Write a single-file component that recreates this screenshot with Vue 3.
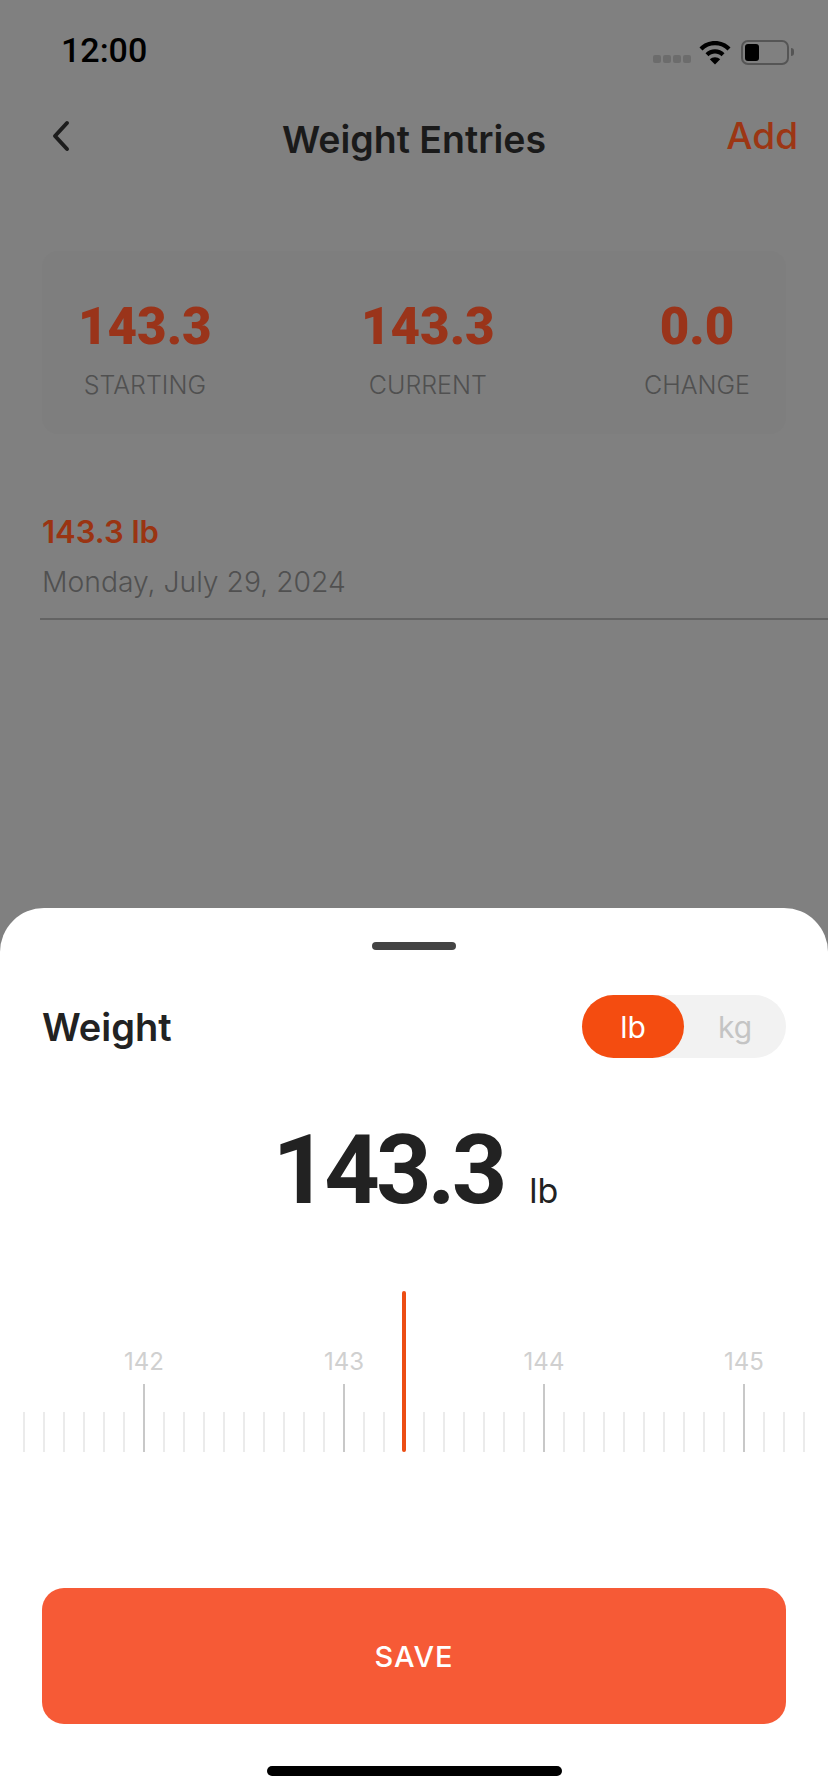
<template>
  <div class="page">
    <div class="status-bar">
      <span class="time">12:00</span>
      <div class="status-icons">
        <div class="signal">
          <i v-for="n in 4" :key="n"></i>
        </div>
        <svg class="wifi" viewBox="0 0 32 25" width="32" height="25">
          <path d="M0.500 7.500C4.500 3.200 10 1 16 1s11.500 2.200 15.500 6.500l-3 3C25.300 7 20.900 5.200 16 5.200S6.700 7 3.500 10.500z" fill="#000" />
          <path d="M6.500 13.300C9 10.700 12.300 9.300 16 9.300s7 1.400 9.500 4l-3 3c-1.700-1.800-4-2.800-6.500-2.800s-4.800 1-6.500 2.800z" fill="#000" />
          <path d="M16 24.500l-5.200-5.300c1.400-1.300 3.200-2 5.200-2s3.800 0.700 5.200 2z" fill="#000" />
        </svg>
        <div class="battery">
          <div class="battery-fill"></div>
        </div>
        <div class="battery-nub"></div>
      </div>
    </div>

    <header class="nav">
      <svg class="back" viewBox="0 0 22 32" width="22" height="32">
        <path d="M17 3L5 16l12 13" fill="none" stroke="#1c1c1c" stroke-width="4" stroke-linecap="round" stroke-linejoin="round" />
      </svg>
      <h1>Weight Entries</h1>
      <span class="add">Add</span>
    </header>

    <section class="summary">
      <div v-for="s in stats" :key="s.label" class="stat">
        <div class="stat-value">{{ s.value }}</div>
        <div class="stat-label">{{ s.label }}</div>
      </div>
    </section>

    <div class="entry">
      <div class="entry-weight">143.3 lb</div>
      <div class="entry-date">Monday, July 29, 2024</div>
    </div>

    <section class="sheet">
      <div class="handle"></div>

      <div class="sheet-head">
        <span class="sheet-title">Weight</span>
        <div class="unit-toggle">
          <span class="unit active">lb</span>
          <span class="unit">kg</span>
        </div>
      </div>

      <div class="reading">
        <span class="reading-value">143.3</span>
        <span class="reading-unit">lb</span>
      </div>

      <div class="ruler">
        <div class="pointer"></div>
        <div
          v-for="t in ticks"
          :key="t.index"
          class="tick"
          :class="{ major: t.label }"
        >
          <span v-if="t.label" class="tick-label">{{ t.label }}</span>
        </div>
      </div>

      <button class="save">SAVE</button>
      <div class="home-indicator"></div>
    </section>
  </div>
</template>

<script setup>
const stats = [
  { value: '143.3', label: 'STARTING' },
  { value: '143.3', label: 'CURRENT' },
  { value: '0.0', label: 'CHANGE' }
]

// one tick every 20px, a labelled one every 10th
const ticks = Array.from({ length: 40 }, (_, index) => ({
  index,
  label: (index - 6) % 10 === 0 ? String(142 + (index - 6) / 10) : ''
}))
</script>

<style>
html,
body {
  margin: 0;
  background: #808080;
}
</style>

<style scoped>
* {
  box-sizing: border-box;
}

.page {
  width: 828px;
  height: 1792px;
  overflow: hidden;
  display: flex;
  flex-direction: column;
  background: #808080;
  font-family: Inter, "Noto Sans", sans-serif;
}

.status-bar {
  height: 100px;
  padding: 32px 34px 0 61px;
  display: flex;
  justify-content: space-between;
  align-items: flex-start;
  flex-shrink: 0;
}

.time {
  font-family: Roboto, sans-serif;
  font-weight: 500;
  font-size: 34px;
  line-height: 36px;
  color: #000;
}

.status-icons {
  display: flex;
  align-items: center;
  height: 36px;
  margin-top: 2px;
}

.signal {
  display: flex;
  gap: 2px;
  margin: 13px 8px 0 0;
}

.signal i {
  display: block;
  width: 8px;
  height: 8px;
  border-radius: 2px;
  background: #6c6c6c;
}

.wifi {
  margin-right: 10px;
}

.battery {
  width: 48px;
  height: 25px;
  border: 2px solid #555;
  border-radius: 7px;
  padding: 2px;
}

.battery-fill {
  width: 14px;
  height: 17px;
  background: #000;
  border-radius: 3px;
}

.battery-nub {
  width: 3px;
  height: 8px;
  margin-left: 2px;
  background: #555;
  border-radius: 0 3px 3px 0;
}

.nav {
  height: 78px;
  padding: 0 30px 0 50px;
  display: flex;
  justify-content: space-between;
  align-items: center;
  position: relative;
  flex-shrink: 0;
}

.back {
  margin-bottom: 6px;
}

.nav h1 {
  position: absolute;
  left: 0;
  right: 0;
  top: 19px;
  margin: 0;
  text-align: center;
  font-size: 37.500px;
  line-height: 42px;
  font-weight: 600;
  color: #1a1a1a;
}

.add {
  font-size: 37px;
  font-weight: 500;
  color: #9c3614;
  margin-bottom: 8px;
}

.summary {
  margin: 73px 42px 0;
  height: 183px;
  padding: 0 36px;
  display: flex;
  justify-content: space-between;
  align-items: flex-start;
  background: #7e7e7e;
  border-radius: 16px;
  flex-shrink: 0;
}

.stat {
  display: flex;
  flex-direction: column;
  align-items: center;
  padding-top: 46px;
}

.stat-value {
  font-family: Roboto, sans-serif;
  font-weight: 900;
  font-size: 51px;
  line-height: 60px;
  color: #9a341a;
}

.stat-label {
  margin-top: 12px;
  font-size: 25px;
  line-height: 32px;
  font-weight: 300;
  color: #505050;
}

.entry {
  margin: 78px 0 0 40px;
  height: 108px;
  padding-left: 2px;
  border-bottom: 2px solid #636363;
  flex-shrink: 0;
}

.entry-weight {
  font-size: 31px;
  line-height: 40px;
  font-weight: 600;
  color: #9a3412;
}

.entry-date {
  margin-top: 10px;
  font-size: 28.300px;
  line-height: 40px;
  font-weight: 300;
  color: #505050;
}

.sheet {
  margin-top: auto;
  height: 884px;
  flex-shrink: 0;
  background: #fff;
  border-radius: 44px 44px 0 0;
  display: flex;
  flex-direction: column;
  align-items: center;
}

.handle {
  width: 84px;
  height: 8px;
  margin-top: 34px;
  border-radius: 4px;
  background: #444;
}

.sheet-head {
  width: 100%;
  margin-top: 45px;
  padding: 0 42px;
  display: flex;
  justify-content: space-between;
  align-items: center;
}

.sheet-title {
  font-size: 38px;
  font-weight: 600;
  color: #222;
}

.unit-toggle {
  width: 204px;
  height: 63px;
  border-radius: 32px;
  background: #f2f2f2;
  display: flex;
}

.unit {
  width: 102px;
  border-radius: 32px;
  display: flex;
  align-items: center;
  justify-content: center;
  font-size: 30px;
  color: #c4c4c4;
}

.unit.active {
  background: #f44c10;
  color: #fff;
}

.reading {
  margin-top: 56px;
  height: 112px;
  display: flex;
  align-items: baseline;
  justify-content: center;
  margin-left: 3px;
}

.reading-value {
  font-family: Roboto, sans-serif;
  font-weight: 700;
  font-size: 97px;
  line-height: 112px;
  letter-spacing: -4px;
  color: #222;
}

.reading-unit {
  margin-left: 26px;
  font-size: 34px;
  color: #222;
}

.ruler {
  position: relative;
  width: 100%;
  height: 161px;
  margin-top: 65px;
  padding-left: 23px;
  display: flex;
  gap: 18px;
  align-items: flex-end;
}

.pointer {
  position: absolute;
  left: 402px;
  top: 0;
  bottom: 0;
  width: 4px;
  border-radius: 2px;
  background: #ec4d14;
  z-index: 1;
}

.tick {
  position: relative;
  width: 2px;
  height: 40px;
  flex-shrink: 0;
  background: #ebebeb;
}

.tick.major {
  height: 68px;
  background: #c8c8c8;
}

.tick-label {
  position: absolute;
  left: 1px;
  bottom: 76px;
  transform: translateX(-50%);
  font-size: 24px;
  line-height: 28px;
  color: #d0d0d0;
}

.save {
  width: 744px;
  height: 136px;
  margin-top: 136px;
  border: none;
  border-radius: 22px;
  background: #f65a36;
  color: #fff;
  font-family: inherit;
  font-size: 29px;
  font-weight: 500;
  letter-spacing: 1px;
}

.home-indicator {
  width: 295px;
  height: 10px;
  margin-top: 42px;
  border-radius: 5px;
  background: #000;
}
</style>
